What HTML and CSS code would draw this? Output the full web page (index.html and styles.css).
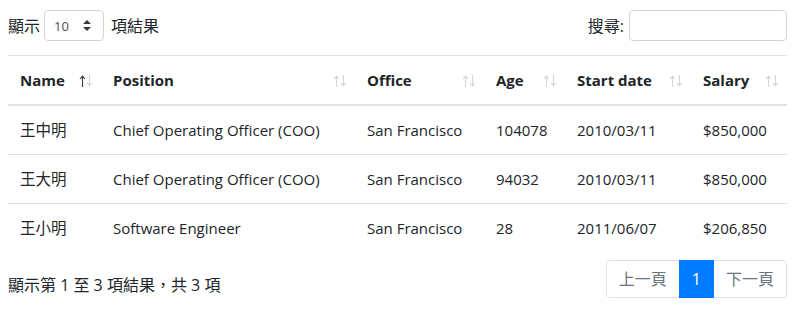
FILE: index.html
```html
<!DOCTYPE html>
<html lang="zh-Hant">
<head>
    <meta charset="UTF-8">
    <title>員工列表</title>
    <link rel="stylesheet" href="styles.css">
</head>
<body>
    <div class="dt-wrapper">
        <div class="dt-top">
            <label class="dt-length">顯示
                <span class="select-sm">10
                    <svg class="caret" width="8" height="11" viewBox="0 0 8 11"><path d="M4 0 L8 4 H0 Z M4 11 L0 7 H8 Z" fill="#343a40"/></svg>
                </span>
                項結果</label>
            <label class="dt-search">搜尋:<span class="input-sm"></span></label>
        </div>

        <table class="dt-table">
            <colgroup>
                <col style="width: 93px">
                <col style="width: 254px">
                <col style="width: 129px">
                <col style="width: 81px">
                <col style="width: 126px">
                <col style="width: 96px">
            </colgroup>
            <thead>
                <tr>
                    <th class="sort-asc"><span class="th-inner">Name<svg class="sort" width="14" height="12" viewBox="0 0 14 12"><path class="up" d="M3.5 12 V1.5 M1 4 L3.5 1.2 L6 4"/><path class="down" d="M10.5 0 V10.5 M8 8 L10.5 10.8 L13 8"/></svg></span></th>
                    <th><span class="th-inner">Position<svg class="sort" width="14" height="12" viewBox="0 0 14 12"><path class="up" d="M3.5 12 V1.5 M1 4 L3.5 1.2 L6 4"/><path class="down" d="M10.5 0 V10.5 M8 8 L10.5 10.8 L13 8"/></svg></span></th>
                    <th><span class="th-inner">Office<svg class="sort" width="14" height="12" viewBox="0 0 14 12"><path class="up" d="M3.5 12 V1.5 M1 4 L3.5 1.2 L6 4"/><path class="down" d="M10.5 0 V10.5 M8 8 L10.5 10.8 L13 8"/></svg></span></th>
                    <th><span class="th-inner">Age<svg class="sort" width="14" height="12" viewBox="0 0 14 12"><path class="up" d="M3.5 12 V1.5 M1 4 L3.5 1.2 L6 4"/><path class="down" d="M10.5 0 V10.5 M8 8 L10.5 10.8 L13 8"/></svg></span></th>
                    <th><span class="th-inner">Start date<svg class="sort" width="14" height="12" viewBox="0 0 14 12"><path class="up" d="M3.5 12 V1.5 M1 4 L3.5 1.2 L6 4"/><path class="down" d="M10.5 0 V10.5 M8 8 L10.5 10.8 L13 8"/></svg></span></th>
                    <th><span class="th-inner">Salary<svg class="sort" width="14" height="12" viewBox="0 0 14 12"><path class="up" d="M3.5 12 V1.5 M1 4 L3.5 1.2 L6 4"/><path class="down" d="M10.5 0 V10.5 M8 8 L10.5 10.8 L13 8"/></svg></span></th>
                </tr>
            </thead>
            <tbody>
                <tr>
                    <td class="cjk">王中明</td>
                    <td>Chief Operating Officer (COO)</td>
                    <td>San Francisco</td>
                    <td>104078</td>
                    <td>2010/03/11</td>
                    <td>$850,000</td>
                </tr>
                <tr>
                    <td class="cjk">王大明</td>
                    <td>Chief Operating Officer (COO)</td>
                    <td>San Francisco</td>
                    <td>94032</td>
                    <td>2010/03/11</td>
                    <td>$850,000</td>
                </tr>
                <tr>
                    <td class="cjk">王小明</td>
                    <td>Software Engineer</td>
                    <td>San Francisco</td>
                    <td>28</td>
                    <td>2011/06/07</td>
                    <td>$206,850</td>
                </tr>
            </tbody>
        </table>

        <div class="dt-bottom">
            <div class="dt-info">顯示第 1 至 3 項結果，共 3 項</div>
            <ul class="pagination">
                <li class="page-item disabled"><span class="page-link">上一頁</span></li>
                <li class="page-item active"><span class="page-link">1</span></li>
                <li class="page-item disabled"><span class="page-link">下一頁</span></li>
            </ul>
        </div>
    </div>
</body>
</html>
```
FILE: styles.css
```css
body {
    margin: 8px;
    font-family: "Open Sans", "Noto Sans CJK TC", sans-serif;
    font-size: 16px;
    line-height: 24px;
    color: #212529;
    background: #fff;
}
.dt-wrapper {
    width: 779px;
    padding-top: 2px;
}
.dt-top {
    display: flex;
    justify-content: space-between;
    align-items: center;
    height: 31px;
}
.dt-length, .dt-search {
    display: flex;
    align-items: center;
    white-space: nowrap;
}
.select-sm {
    display: flex;
    align-items: center;
    justify-content: space-between;
    box-sizing: border-box;
    width: 60px;
    height: 31px;
    margin: 0 7px 0 4px;
    padding: 0 12px 0 9px;
    border: 1px solid #ced4da;
    border-radius: 4px;
    font-size: 13px;
    color: #495057;
}
.input-sm {
    display: block;
    box-sizing: border-box;
    width: 158px;
    height: 31px;
    margin-left: 5px;
    border: 1px solid #ced4da;
    border-radius: 4px;
}
.dt-table {
    width: 779px;
    table-layout: fixed;
    border-collapse: collapse;
    margin-top: 14px;
    font-size: 15px;
}
.dt-table th, .dt-table td {
    padding: 12px;
    text-align: left;
    border-top: 1px solid #dee2e6;
    white-space: nowrap;
}
.dt-table td.cjk {
    font-size: 15.5px;
}
.dt-table th {
    padding-right: 8px;
    border-bottom: 2px solid #dee2e6;
    font-weight: 700;
}
.th-inner {
    display: flex;
    justify-content: space-between;
    align-items: center;
}
.sort {
    flex: none;
    margin-top: 1px;
}
.sort path {
    fill: none;
    stroke: #d3d5d8;
    stroke-width: 1.1;
}
.sort-asc .sort .up {
    stroke: #343a40;
}
.dt-bottom {
    display: flex;
    justify-content: space-between;
    align-items: flex-start;
    margin-top: 8px;
}
.dt-info {
    padding-top: 13px;
}
.pagination {
    display: flex;
    list-style: none;
    margin: 0;
    padding: 0;
}
.page-link {
    display: block;
    padding: 8px 12px;
    line-height: 20px;
    border: 1px solid #dee2e6;
    margin-left: -1px;
    color: #007bff;
}
.page-item:first-child .page-link {
    margin-left: 0;
    border-radius: 4px 0 0 4px;
}
.page-item:last-child .page-link {
    border-radius: 0 4px 4px 0;
}
.page-item.disabled .page-link {
    color: #6c757d;
}
.page-item.active .page-link {
    position: relative;
    z-index: 1;
    background: #007bff;
    border-color: #007bff;
    color: #fff;
}
```
